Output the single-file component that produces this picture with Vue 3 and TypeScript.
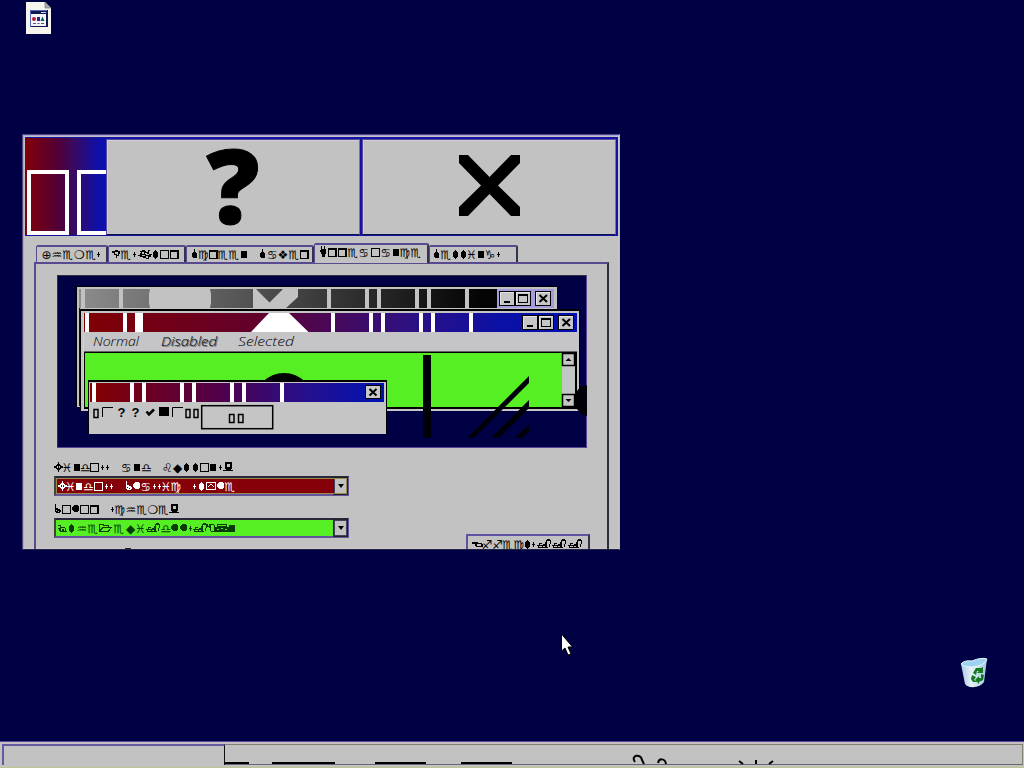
<script setup lang="ts">
import { defineComponent, h } from 'vue'

type Glyph = [string, number]

// Pictographs that have no plain character in the symbol font, centred on 0,0
const drawn: Record<string, string> = {
  drop: 'M0-5H1V-2H2L3 0V3L2 4H-1L-2 3V0L-1-2H0Z',
  diamond: 'M0-4H1L3-1V2L1 5H0L-2 2V-1Z',
  star: 'M0-2H1V0H2V1H1V3H0V1H-1V0H0Z',
  pc: 'M-3-5H4V2H-3ZM-1-3V0H2V-3ZM-5 3H5V4H-5ZM-2 2H3V3H-2Z',
  folder: 'M-7 4V-4H-2V-3H3V-1H6L3 4ZM-6 2L-4-1H2V-2H-3V-3H-6ZM-5 3H2L4 0H-3Z',
  hand: 'M-7 1H-5V-1H-2V0H1V-2H2V-4H3V-5H6V-4H7V0H6V3H4V4H-6V2H-7ZM-4 0V1H-1V0ZM-5 2V3H-2V2ZM3-3V3H5V0H6V-3ZM-1 2V3H1V2Z',
  thumb: 'M-3-5H-2V-1H0V0H2V1H3V3H2V4H-2V3H-3ZM-2 1V2H-1V1ZM0 2V3H1V2Z',
  mouse: 'M-5-3H-2V-1H2V0H3V3H4V4H-3V3H-4V1H-5V0H-3V-2H-5ZM-2 0V3H-1V1H1V3H2V0Z',
  trackball: 'M-4-4H-3V-2H-2V-4H3V-3H4V4H0V3H-1V0H-2V-1H-4ZM0-3V3H3V-3Z',
  keys: 'M-5-4H5V-1H7V4H-7V-1H-5ZM-4-3V-2H4V-3ZM-5 1V2H-3V1ZM-1 0V1H1V0ZM3 1V2H5V1Z',
  peace: 'M-3-6H-2V-3H0V-6H1V-3H2V2H1V5H-2V2H-3V0H-4V-2H-3Z',
  dart: 'M-5-3H-2V-4H1V-3H3V0H2V2H0V4H-1V1H-3V-1H-5ZM-2-2V0H0V1H1V-2Z',
  pointer: 'M-6-2H0V-1H4V0H5V3H-2V2H-3V0H-6ZM-1 0V2H3V0Z',
  roof: 'M-5-4H5V4H-5ZM-4-3V3H4V-3ZM-3 1V0H-2V-1H-1V-2H1V-1H2V0H3V1H2V0H1V-1H-1V0H-2V1Z',
  curl: 'M-5-3H-3V-4H0V-3H1V-2H3V-4H5V-3H4V0H7V1H6V3H4V5H1V4H3V2H1V4H-2V3H-5V2H-7V1H-5V-1H-4V-2H-5ZM-3-2H-1V0H-3ZM-3 1V2H0V0H1V1H4V0H2V-1H0V1Z',
  cross: 'M0-5H1V-3H2V-2H3V-1H5V1H3V2H2V3H1V5H0V3H-1V2H-2V1H-4V-1H-2V-2H-1V-3H0ZM-1-1V1H0V-1ZM1-1V1H2V-1Z',
  box: 'M-4-4H5V5H-4ZM-3-3V4H4V-3Z',
  shade: 'M-4-4H5V5H-4ZM-3-2V4H3V-2Z',
  block: 'M-3-3H3V4H-3Z',
  ball: 'M-1-4H2L4-2V1L2 3H-1L-3 1V-2Z',
}

const Symbols = defineComponent({
  props: { items: { type: Array as () => Glyph[], required: true }, left: { type: Number, default: 0 } },
  setup(p) {
    return () =>
      h('svg', { class: 'symbols', width: 1, height: 14, fill: 'currentColor', overflow: 'visible' },
        p.items.map(([g, x]) =>
          drawn[g]
            ? h('path', { d: drawn[g], 'fill-rule': 'evenodd', transform: `translate(${Math.floor(x - p.left)},6)` })
            : h('text', { x: x - p.left, y: 10.5, 'text-anchor': 'middle' }, g + '\uFE0E'),
        ),
      )
  },
})

const tabs: { left: number; width: number; active?: boolean; items: Glyph[] }[] = [
  { left: 36, width: 72, items: [['⊕', 46.5], ['♒', 57], ['♏', 68], ['❍', 79.5], ['♏', 91], ['star', 98]] },
  { left: 108, width: 78, items: [['dart', 117], ['♏', 126], ['star', 134.5], ['curl', 145], ['diamond', 155], ['box', 164.5], ['shade', 174]] },
  { left: 186, width: 128, items: [['drop', 194.5], ['♍', 203.5], ['shade', 213], ['♏', 223], ['♏', 234], ['block', 244], ['drop', 262.5], ['♋', 272.5], ['❖', 283], ['♏', 294], ['shade', 304.5]] },
  { left: 314, width: 115, active: true, items: [['peace', 324.5], ['shade', 332.5], ['shade', 342], ['♏', 353], ['♋', 364], ['box', 375], ['♋', 386], ['block', 396], ['♍', 405], ['♏', 416]] },
  { left: 429, width: 89, items: [['drop', 436.5], ['♏', 446], ['diamond', 455], ['diamond', 463], ['♓', 471.5], ['block', 481], ['♑', 490], ['star', 498]] },
]
const windowLabel: Glyph[] = [['cross', 58.5], ['♓', 67], ['block', 77], ['♎', 85.5], ['box', 94.5], ['star', 102], ['star', 107.5], ['♋', 126.5], ['block', 137], ['♎', 146.5], ['♌', 167.5], ['◆', 177.5], ['diamond', 186.5], ['diamond', 195.5], ['box', 204], ['block', 213], ['star', 220], ['pc', 228]]
const windowValue: Glyph[] = [['cross', 62.5], ['♓', 70.5], ['block', 79], ['♎', 88.5], ['box', 98], ['star', 106], ['star', 111.5], ['thumb', 129], ['ball', 136], ['♋', 146], ['star', 154.5], ['star', 159.5], ['♓', 166], ['♍', 176], ['star', 194.5], ['diamond', 201.5], ['roof', 211], ['ball', 220.5], ['♏', 230]]
const schemeLabel: Glyph[] = [['thumb', 58.5], ['box', 66.5], ['ball', 75], ['box', 84], ['shade', 94], ['star', 112.5], ['♍', 120], ['♒', 131], ['♏', 142], ['❍', 153], ['♏', 163.5], ['pc', 174.5]]
const schemeValue: Glyph[] = [['mouse', 63], ['diamond', 71.5], ['♒', 82], ['♏', 93], ['folder', 106.5], ['♏', 119], ['◆', 130.5], ['♓', 140.5], ['hand', 153], ['♎', 166], ['ball', 174], ['ball', 183.5], ['star', 190.5], ['hand', 200], ['trackball', 211], ['keys', 222.5], ['block', 232]]
const effects: Glyph[] = [['pointer', 478], ['♐', 487], ['♐', 497.5], ['♏', 508], ['♍', 519], ['diamond', 527], ['star', 533], ['hand', 544], ['hand', 559.5], ['hand', 575.5]]

const backBars = [[81, 4], [119, 4], [327, 4], [365, 4], [377, 4], [415, 4], [427, 4], [465, 4]]
const frontBars = [[85, 4], [123, 4], [135, 8], [331, 4], [369, 4], [381, 4], [419, 4], [431, 4], [469, 4]]
const dialogBars = [92, 130, 142, 180, 192, 230, 242, 280]
const captionButtons = [
  { x: 499, y: 291, kind: 'min' }, { x: 515, y: 291, kind: 'max' }, { x: 535, y: 291, kind: 'close' },
  { x: 522, y: 315, kind: 'min' }, { x: 538, y: 315, kind: 'max' }, { x: 558, y: 315, kind: 'close' },
]
</script>

<template>
  <div class="desktop">
    <svg class="file-icon" width="28" height="34" viewBox="0 0 28 34">
      <path d="M1 1H20L26 7V33H1Z" fill="#f5f5ee" />
      <path d="M20 1V7H26Z" fill="#aaa" stroke="#777" stroke-width=".7" />
      <rect x="5" y="9" width="18" height="17" fill="#10184c" />
      <path d="M5.500 26V9.500H22" fill="none" stroke="#5868b8" />
      <rect x="6" y="13" width="15" height="12" fill="#f4f4fa" />
      <path d="M16 11.500H21" stroke="#c8d4ff" />
      <circle cx="9" cy="18" r="2" fill="#b02030" /><rect x="12" y="16" width="3" height="4" fill="#242480" /><path d="M15.500 20L17.500 15.500L19.500 20Z" fill="#106050" />
      <path d="M8 22.500H11M12.500 22.500H14.500M16 22.500H19" stroke="#555577" />
    </svg>

    <svg class="bin-icon" width="30" height="32" viewBox="0 0 30 32">
      <defs><linearGradient id="bin" x2="1"><stop stop-color="#a9cce8" /><stop offset=".4" stop-color="#e4f1f7" /><stop offset="1" stop-color="#9ec8df" /></linearGradient></defs>
      <path d="M2 7L12 9L28 2L25 25Q21 31 11 30Q7 29 6 27Z" fill="url(#bin)" />
      <path d="M2 7Q5 3 13 4Q22 0 28 2Q26 9 13 10Q4 10 2 7Z" fill="#9fd2f1" stroke="#e8f8ff" />
      <path d="M14 16L17 11H22L24 10V16H18L20 14H18L17 18ZM22 17L25 18L24 23L20 25V27L16 23L20 19V21L22 21ZM13 18L17 20L15 23L18 25H14L12 22Z" fill="#16791f" />
    </svg>

    <section class="window">
      <header class="title">
        <svg class="caption" width="81" height="97">
          <defs><linearGradient id="caption" x2="1"><stop stop-color="#820008" /><stop offset=".42" stop-color="#500038" /><stop offset=".6" stop-color="#380a60" /><stop offset=".9" stop-color="#1010a8" /><stop offset="1" stop-color="#0c10b4" /></linearGradient></defs>
          <rect width="81" height="97" fill="url(#caption)" />
          <path d="M4 34H42V95H4ZM54 34H92V95H54Z" fill="none" stroke="#fff" stroke-width="4" />
        </svg>
        <button class="big"><svg width="252" height="94"><text class="question" transform="translate(126 84) scale(1.030 1)" text-anchor="middle">?</text></svg></button>
        <button class="big"><svg width="252" height="94"><path d="M96 15H105L126.500 37L148 15H157V23L135 45.500L157 67V76H148L126.500 54L105 76H96V67L118 45.500L96 23Z" /></svg></button>
      </header>

      <nav class="tabs">
        <div v-for="t in tabs" :key="t.left" class="tab" :class="{ active: t.active }" :style="{ width: t.width + 'px' }">
          <Symbols :items="t.items" :left="t.left + 1" />
        </div>
      </nav>

      <main class="panel">
        <svg class="preview" width="530" height="173" viewBox="57 275 530 173">
          <defs>
            <linearGradient id="grey" gradientUnits="userSpaceOnUse" x1="79" x2="480"><stop stop-color="#8c8c8c" /><stop offset=".5" stop-color="#484848" /><stop offset="1" stop-color="#040404" /></linearGradient>
            <linearGradient id="front" gradientUnits="userSpaceOnUse" x1="83" x2="577"><stop stop-color="#800004" /><stop offset=".35" stop-color="#62002c" /><stop offset=".5" stop-color="#480858" /><stop offset=".65" stop-color="#301080" /><stop offset=".84" stop-color="#0c10a4" /><stop offset="1" stop-color="#0010b4" /></linearGradient>
            <linearGradient id="dialog" gradientUnits="userSpaceOnUse" x1="90" x2="383"><stop stop-color="#840000" /><stop offset=".45" stop-color="#50004c" /><stop offset=".75" stop-color="#241090" /><stop offset="1" stop-color="#0012b4" /></linearGradient>
          </defs>
          <rect x="57" y="275" width="530" height="173" fill="#000044" />
          <path d="M57.500 448V275.500H587" fill="none" stroke="#30303c" />
          <path d="M57 447.500H586.500V275" fill="none" stroke="#584498" />
          <rect x="76" y="286" width="481" height="121" fill="#000" />
          <rect x="77" y="287" width="480" height="120" fill="#c2c2c2" />
          <path d="M79.500 308V406" stroke="#111" />
          <rect x="79" y="289" width="418" height="19" fill="url(#grey)" />
          <g fill="#c2c2c2">
            <rect v-for="b in backBars" :key="b[0]" :x="b[0]" y="289" :width="b[1]" height="19" />
            <path d="M150 289H210L211 294V303L210 308H150L149 303V294ZM253 289H256L269.500 302.500L283 289H298V297L286 308H253Z" />
          </g>
          <rect x="497" y="289" width="57" height="19" fill="#a69bdd" />
          <rect x="80" y="309" width="500" height="102" fill="#000" />
          <rect x="81" y="311" width="498" height="100" fill="#c5c5c8" />
          <rect x="83" y="313" width="494" height="19" fill="url(#front)" />
          <g fill="#fff">
            <rect v-for="b in frontBars" :key="b[0]" :x="b[0]" y="313" :width="b[1]" height="19" />
            <path d="M269 313H289L308.500 332H251Z" />
          </g>
          <g class="menu-text">
            <text x="93" y="346" textLength="46" lengthAdjust="spacingAndGlyphs">Normal</text>
            <text x="162" y="347" textLength="56" lengthAdjust="spacingAndGlyphs" fill="#666">Disabled</text>
            <text x="161" y="346" textLength="56" lengthAdjust="spacingAndGlyphs">Disabled</text>
            <text x="238" y="346" textLength="56" lengthAdjust="spacingAndGlyphs">Selected</text>
          </g>
          <rect x="84" y="351.500" width="493" height="57.500" />
          <rect x="85" y="353" width="477" height="54" fill="#55ef24" />
          <rect x="562" y="353" width="13" height="54" fill="#c2c7c5" />
          <g fill="#c6c6c6" stroke="#000" stroke-width="1.500"><rect x="562.500" y="353.500" width="12" height="12" /><rect x="562.500" y="394.500" width="12" height="12" /></g>
          <path d="M565.500 361L568.500 358L571.500 361ZM565.500 399H571.500L568.500 402Z" />
          <circle cx="284" cy="403" r="30" clip-path="inset(0 0 30px 0)" />
          <path d="M83.500 313V409" stroke="#d0d0d0" />
          <path d="M423 355H431V438H423ZM529 376V383L474 438H467ZM529 400V408L499 438H491ZM529 425V432L522 438H514ZM587 385L580 387L577 391V409L581 414L587 416Z" fill="#000008" />
          <rect x="88" y="380" width="299" height="54" />
          <rect x="89" y="382" width="297" height="52" fill="#c5c5c5" />
          <rect x="90" y="383" width="294" height="19" fill="url(#dialog)" />
          <rect v-for="x in dialogBars" :key="x" :x="x" y="383" width="4" height="19" fill="#fff" />
          <rect x="365.500" y="385.500" width="15" height="13" fill="#c8c8c8" stroke="#000" />
          <path d="M369.500 389L376.500 395.500M376.500 389L369.500 395.500" stroke="#000" stroke-width="2" />
          <g v-for="b in captionButtons" :key="b.x" :transform="`translate(${b.x} ${b.y})`">
            <rect x=".5" y=".5" width="15" height="14" fill="#c6c6c6" stroke="#000" />
            <path d="M1.500 14V1.500H15" fill="none" stroke="#e4e4e4" />
            <path v-if="b.kind === 'min'" d="M5 10H11V12H5Z" />
            <path v-else-if="b.kind === 'max'" d="M3 3H13V12H3ZM4 5V11H12V5Z" fill-rule="evenodd" />
            <path v-else d="M4.500 4L12 11M12 4L4.500 11" stroke="#000" stroke-width="2" />
          </g>
          <g fill="none" stroke="#000" stroke-width="1.500">
            <path d="M94 409.500H98V417.500H94ZM186 409.500H190V417.500H186ZM194 409.500H198V417.500H194ZM229.500 414.500H234V422.500H229.500ZM238.500 414.500H243V422.500H238.500Z" />
            <path d="M102.500 417V407.500H113M172.500 417V407.500H183" stroke-width="1" />
            <rect x="201.700" y="405.700" width="71" height="23" />
            <path d="M146.500 411.500L149 414.500L154 409.500" stroke-width="2.500" />
          </g>
          <rect x="159" y="407" width="10" height="9" />
          <g class="marks"><text x="117.500" y="417">?</text><text x="131.500" y="417">?</text></g>
        </svg>

        <div class="fields">
          <div class="label"><Symbols :items="windowLabel" :left="54" /></div>
          <div class="combo red"><Symbols :items="windowValue" :left="56" /><i class="arrow"><svg width="6" height="4"><path d="M0 0H6L3 4Z" /></svg></i></div>
          <div class="label second"><Symbols :items="schemeLabel" :left="54" /></div>
          <div class="combo green"><Symbols :items="schemeValue" :left="56" /><i class="arrow"><svg width="6" height="4"><path d="M0 0H6L3 4Z" /></svg></i></div>
        </div>
        <footer class="bottom"><span class="dash"></span><button class="effects"><Symbols :items="effects" :left="468" /></button></footer>
      </main>
    </section>

    <svg class="cursor" width="14" height="24" viewBox="0 0 14 24"><path d="M1.500 1V18L5 15L8 22L11 21L8 14H12.500Z" fill="#fff" stroke="#000" /></svg>

    <footer class="taskbar">
      <div class="start"></div>
      <div class="tray">
        <svg width="796" height="20" viewBox="225 745 796 20" fill="none" stroke="#000" stroke-width="2">
          <path d="M225 763H249M272 763H335M375 763H426M461 763H512" />
          <path d="M635 762C630 755 641 753 642 760L644 764M658 763C659 758 665 758 666 764M739 761L743 764M756 760V764M773 761L769 764" />
        </svg>
      </div>
    </footer>
  </div>
</template>

<style>
body { margin: 0; overflow: hidden; }
.symbols { display: block; font: 12px "DejaVu Sans", sans-serif; shape-rendering: crispEdges; flex: none; }
</style>

<style scoped>
.desktop { width: 1024px; height: 768px; background: #000044; position: relative; overflow: hidden; display: flex; flex-direction: column; justify-content: flex-end; font-family: "Liberation Sans", sans-serif; }
* { box-sizing: border-box; }
svg { display: block; }
button { padding: 0; margin: 0; border-radius: 0; background: #c2c2c2; }
.file-icon { position: absolute; left: 25px; top: 1px; }
.bin-icon { position: absolute; left: 959px; top: 657px; }
.cursor { position: absolute; left: 560px; top: 633px; }
.window { position: absolute; left: 22px; top: 134px; width: 598px; height: 416px; background: #c2c2c2; border: 1px solid #514682; border-right-color: #b8b8ce; border-bottom: 1px solid #222244; box-shadow: inset 1px 1px #aaa7d8, inset -1px -1px #c9c9c9; padding: 2px 1px 0 2px; overflow: hidden; display: flex; flex-direction: column; }
.title { height: 99px; flex: none; display: flex; background: #1014a0; padding-top: 1px; }
.caption { flex: none; }
.big { width: 254px; height: 96px; margin: 1px 2px 0 0; border: 1px solid #5848a0; border-bottom-color: #111144; border-right-color: #777799; box-shadow: inset 1px 1px #d0d0d0; flex: none; overflow: hidden; }
.big svg { width: 252px; height: 94px; }
.question { font: 800 102px "Open Sans", "Lato", sans-serif; stroke: #000; stroke-width: 1px; }
.tabs { display: flex; align-items: flex-end; height: 26px; padding-left: 11px; flex: none; position: relative; z-index: 1; }
.tab { height: 17px; flex: none; border: 1px solid #59498f; border-width: 2px 2px 0 1px; border-right-color: #33334c; border-radius: 2px 2px 0 0; background: #c2c2c2; }
.tab .symbols { margin-top: 1px; }
.tab.active { height: 20px; margin-bottom: -1px; }
.panel { width: 575px; height: 300px; margin-left: 9px; flex: none; border: 1px solid #59498f; border-width: 2px 2px 0; border-right-color: #30303c; padding: 11px 0 0 21px; }
.fields { margin-left: -3px; padding-top: 13px; width: 295px; }
.label { height: 15px; }
.label.second { margin-top: 7px; height: 15px; }
.combo { height: 20px; border: 2px solid #63549c; border-top-color: #28283c; border-left-color: #44443c; display: flex; align-items: center; justify-content: space-between; color: #000; }
.combo .symbols { margin-top: 2px; }
.combo.red { background: #850008; color: #fff; outline: 1px solid #988b48; outline-offset: -3px; }
.combo.green { background: #55ef24; color: #063d06; }
.arrow { width: 13px; height: 16px; border: 1px solid #44405c; background: #c2c2c2; display: flex; align-items: center; justify-content: center; flex: none; outline: 1px solid #222; }
.bottom { display: flex; align-items: flex-start; justify-content: space-between; padding: 0 17px 0 68px; margin-top: -4px; }
.dash { width: 6px; height: 1px; background: #222; margin-top: 14px; }
.effects { width: 124px; height: 26px; border: 2px solid #6051a1; border-right-color: #33334c; display: flex; align-items: flex-start; }
.effects .symbols { margin-top: 2px; }
.menu-text { font: italic 300 13px "Open Sans", "Liberation Sans", sans-serif; }
.marks { font: bold 13px "Liberation Sans", sans-serif; }
.taskbar { height: 27px; flex: none; background: #c2c2c2; border-top: 1px solid #5844a0; box-shadow: inset 0 1px #c8bcc0; padding: 2px 1px 2px 2px; border-bottom: 1px solid #bec88e; display: flex; }
.start { width: 223px; border: 2px solid #6657a2; border-right: 1px solid #111; border-bottom: 0; }
.tray { flex: 1; border: 1px solid #858172; border-left: 0; border-bottom-color: #67676c; }
</style>
